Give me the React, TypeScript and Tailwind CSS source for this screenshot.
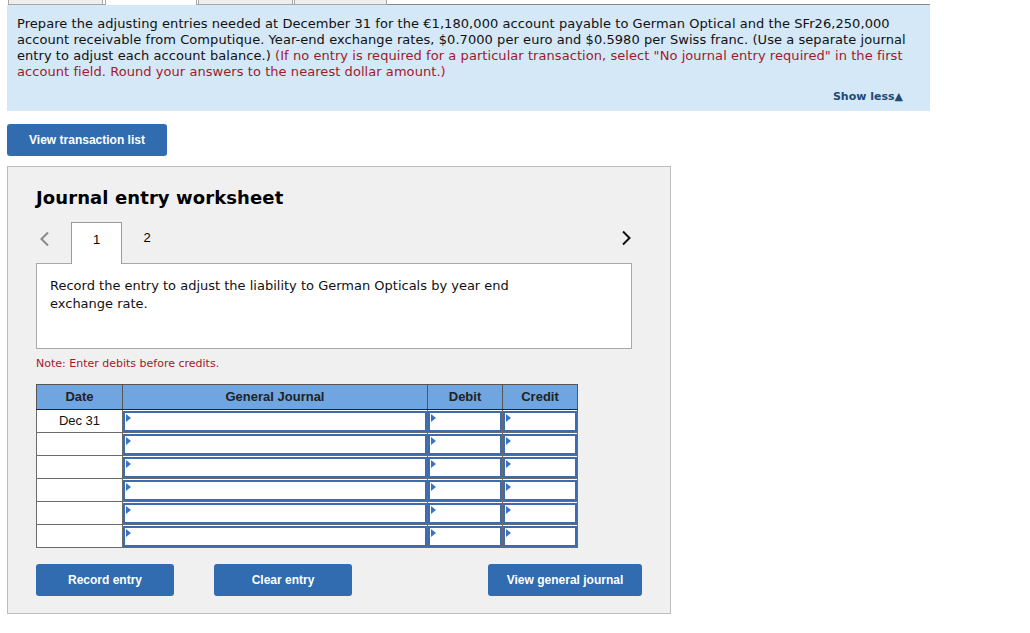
import React from "react";

const verdana = { fontFamily: '"DejaVu Sans", Verdana, sans-serif' };

function Tri() {
  return (
    <span className="absolute left-[1px] top-[1px] w-0 h-0 border-t-[4px] border-b-[4px] border-l-[5px] border-t-transparent border-b-transparent border-l-[#3b73c4]" />
  );
}

function InputCell({ w }: { w: string }) {
  return (
    <td className={`${w} h-[23px] p-0 border border-[#6b6b6b] bg-white`}>
      <div className="relative h-[21px] border-2 border-[#3c6cae] bg-white">
        <Tri />
      </div>
    </td>
  );
}

export default function App() {
  const rows = [0, 1, 2, 3, 4, 5];
  return (
    <div className="w-[1030px] h-[633px] bg-white overflow-hidden" style={verdana}>
      {/* top tabs strip */}
      <div className="flex h-[5px] pl-[8px]">
        <div className="w-[95px] h-[5px] bg-[#eeeeee] border-x border-b border-[#a8a8a8]" />
        <div className="w-[2px] h-[5px] border-b border-[#a8a8a8]" />
        <div className="w-[92px] h-[5px] bg-white border-x border-[#a8a8a8]" />
        <div className="w-[1px] h-[5px] border-b border-[#a8a8a8]" />
        <div className="w-[95px] h-[5px] bg-[#eeeeee] border-x border-b border-[#a8a8a8]" />
        <div className="w-[1px] h-[5px] border-b border-[#a8a8a8]" />
        <div className="w-[93px] h-[5px] bg-[#eeeeee] border-x border-b border-[#a8a8a8]" />
        <div className="w-[543px] h-[5px] border-b border-[#888888]" />
      </div>

      {/* instructions panel */}
      <div className="ml-[7px] w-[923px] h-[106px] bg-[#d4e8f7] pl-[10px] pr-[18px] pt-[11px] flex flex-col">
        <p className="text-[13px] leading-[16px] tracking-[0.06px] text-[#111]">
          Prepare the adjusting entries needed at December 31 for the €1,180,000 account payable to German Optical and the SFr26,250,000 account receivable from Computique. Year-end exchange rates, $0.7000 per euro and $0.5980 per Swiss franc. (Use a separate journal entry to adjust each account balance.){" "}
          <span className="text-[#a3182c]">
            (If no entry is required for a particular transaction, select "No journal entry required" in the first account field. Round your answers to the nearest dollar amount.)
          </span>
        </p>
        <div className="mt-auto mb-[7px] mr-[9px] self-end text-[11px] font-bold text-[#1e4a78] leading-[14px]">
          Show less▲
        </div>
      </div>

      {/* View transaction list */}
      <button
        className="mt-[13px] ml-[7px] w-[160px] h-[32px] rounded-[3px] bg-[#316bb0] text-white text-[12px] font-bold flex items-center justify-center"
        style={{ fontFamily: '"Liberation Sans", Arial, sans-serif' }}
      >
        View transaction list
      </button>

      {/* worksheet */}
      <div className="mt-[10px] ml-[7px] w-[664px] h-[448px] bg-[#f0f0f0] border border-[#bdbdbd] pl-[28px]">
        <h2 className="mt-[19px] text-[18px] font-bold leading-[24px] tracking-[0.1px] text-black">Journal entry worksheet</h2>

        {/* tabs */}
        <div className="mt-[11px] flex items-end h-[42px] w-[596px] relative">
          <div className="w-[35px] h-full flex items-center pl-[3px] pb-[7px]">
            <svg width="11" height="16" viewBox="0 0 11 16">
              <path d="M9 1.5 L2.5 8 L9 14.5" fill="none" stroke="#8a8a8a" strokeWidth="2" />
            </svg>
          </div>
          <div
            className="w-[51px] h-[42px] bg-white border-x border-t border-[#9a9a9a] flex items-center justify-center pb-[8px] text-[13px] text-black relative z-10 -mb-[1px]"
            style={{ fontFamily: '"Liberation Sans", Arial, sans-serif' }}
          >
            1
          </div>
          <div
            className="w-[50px] h-full flex items-center justify-center pb-[8px] text-[13px] text-black"
            style={{ fontFamily: '"Liberation Sans", Arial, sans-serif' }}
          >
            2
          </div>
          <div className="ml-auto h-full flex items-center pb-[9px] pr-[0px]">
            <svg width="11" height="16" viewBox="0 0 11 16">
              <path d="M2 1.5 L8.5 8 L2 14.5" fill="none" stroke="#111" strokeWidth="2" />
            </svg>
          </div>
        </div>

        {/* description */}
        <div className="w-[596px] h-[86px] bg-white border border-[#a8a8a8] pl-[13px] pr-[100px] pt-[13px]">
          <p className="text-[13px] leading-[18px] text-[#111]">
            Record the entry to adjust the liability to German Opticals by year end exchange rate.
          </p>
        </div>

        <p className="mt-[8px] text-[11px] leading-[14px] text-[#a3182c]">Note: Enter debits before credits.</p>

        {/* table */}
        <table
          className="mt-[13px] border-collapse w-[541px] table-fixed"
          style={{ fontFamily: '"Liberation Sans", Arial, sans-serif' }}
        >
          <thead>
            <tr className="bg-[#6fa5e1] h-[25px]">
              <th className="w-[86px] border border-[#555] border-b-[#222] text-[13px] font-bold text-[#222]">Date</th>
              <th className="w-[305px] border border-[#555] border-b-[#222] text-[13px] font-bold text-[#222]">General Journal</th>
              <th className="w-[75px] border border-[#555] border-b-[#222] text-[13px] font-bold text-[#222]">Debit</th>
              <th className="w-[75px] border border-[#555] border-b-[#222] text-[13px] font-bold text-[#222]">Credit</th>
            </tr>
          </thead>
          <tbody>
            {rows.map((r) => (
              <tr key={r} className="h-[23px]">
                <td className="w-[86px] h-[23px] p-0 border border-[#6b6b6b] bg-white text-center text-[13px] text-[#111]">
                  {r === 0 ? "Dec 31" : ""}
                </td>
                <InputCell w="w-[305px]" />
                <InputCell w="w-[75px]" />
                <InputCell w="w-[75px]" />
              </tr>
            ))}
          </tbody>
        </table>

        {/* buttons */}
        <div className="mt-[16px] flex w-[606px]" style={{ fontFamily: '"Liberation Sans", Arial, sans-serif' }}>
          <button className="w-[138px] h-[32px] rounded-[3px] bg-[#316bb0] text-white text-[12px] font-bold">
            Record entry
          </button>
          <button className="ml-[40px] w-[138px] h-[32px] rounded-[3px] bg-[#316bb0] text-white text-[12px] font-bold">
            Clear entry
          </button>
          <button className="ml-auto w-[154px] h-[32px] rounded-[3px] bg-[#316bb0] text-white text-[12px] font-bold">
            View general journal
          </button>
        </div>
      </div>
    </div>
  );
}
